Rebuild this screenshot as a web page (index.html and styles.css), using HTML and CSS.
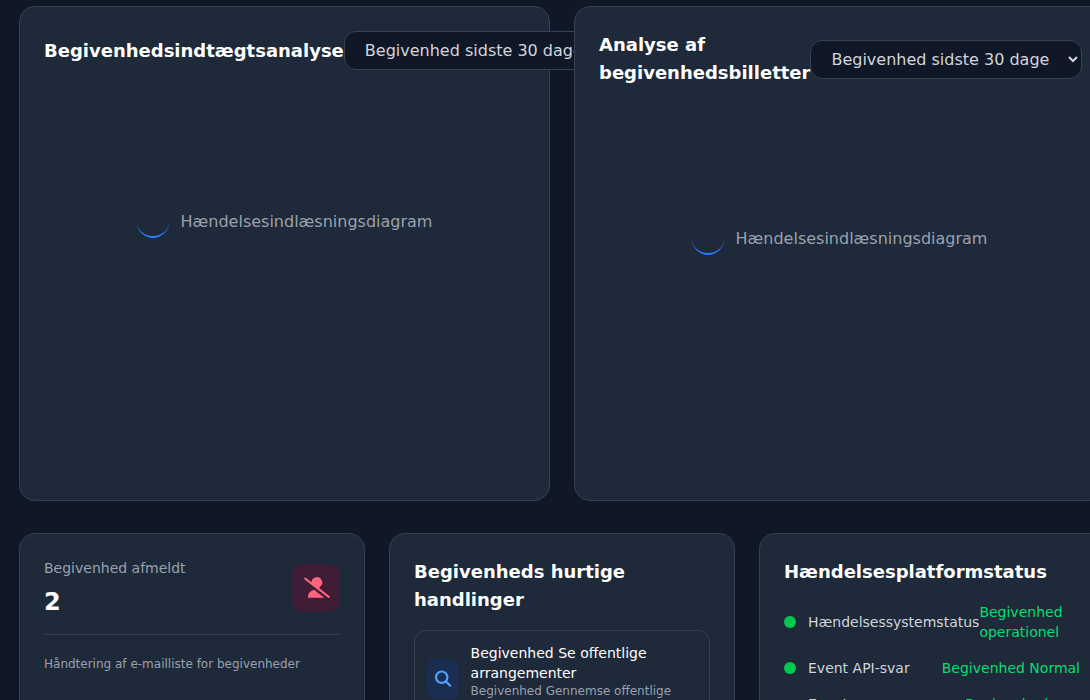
FILE: index.html
```
<!DOCTYPE html>
<html lang="da">
<head>
    <meta charset="UTF-8">
    <meta name="viewport" content="width=device-width, initial-scale=1.0">
    <title>Begivenheder</title>
    <link rel="stylesheet" href="styles.css">
</head>
<body>
    <main class="dashboard">
        <section class="charts">
            <div class="card">
                <div class="card-header">
                    <h3>Begivenhedsindtægtsanalyse</h3>
                    <select class="period">
                        <option>Begivenhed sidste 30 dage</option>
                    </select>
                </div>
                <div class="chart">
                    <div class="spinner"></div>
                    <span>Hændelsesindlæsningsdiagram</span>
                </div>
            </div>
            <div class="card">
                <div class="card-header">
                    <h3>Analyse af begivenhedsbilletter</h3>
                    <select class="period">
                        <option>Begivenhed sidste 30 dage</option>
                    </select>
                </div>
                <div class="chart">
                    <div class="spinner"></div>
                    <span>Hændelsesindlæsningsdiagram</span>
                </div>
            </div>
        </section>

        <section class="widgets">
            <div class="card">
                <div class="stat">
                    <div>
                        <p class="stat-label">Begivenhed afmeldt</p>
                        <p class="stat-value">2</p>
                    </div>
                    <div class="stat-icon">
                        <svg width="28" height="24" viewBox="0 0 28 24" fill="#ff637e">
                            <path d="M9.700 7.500A5.300 5.300 0 1 1 18 10.700L16.500 12.800z"/>
                            <path d="M6 21.800v-1.300A6.600 6.600 0 0 1 12.400 14L22.300 21.800z"/>
                            <path d="M3.200 2.600L26.800 20.900" stroke="#ff637e" stroke-width="2" stroke-linecap="round"/>
                        </svg>
                    </div>
                </div>
                <div class="stat-footer">Håndtering af e-mailliste for begivenheder</div>
            </div>

            <div class="card">
                <h3 class="widget-title">Begivenheds hurtige handlinger</h3>
                <div class="action">
                    <div class="action-icon">
                        <svg width="20" height="20" viewBox="0 0 20 20" fill="none" stroke="#51a2ff" stroke-width="2.200">
                            <circle cx="8.700" cy="8.200" r="5.700"/>
                            <path d="M12.800 12.300l5 5"/>
                        </svg>
                    </div>
                    <div>
                        <p class="action-title">Begivenhed Se offentlige arrangementer</p>
                        <p class="action-text">Begivenhed Gennemse offentlige arrangementer</p>
                    </div>
                </div>
            </div>

            <div class="card">
                <h3 class="widget-title">Hændelsesplatformstatus</h3>
                <div class="status-list">
                    <div class="status">
                        <span class="dot"></span>
                        <span class="status-name">Hændelsessystemstatus</span>
                        <span class="status-value">Begivenhed operationel</span>
                    </div>
                    <div class="status">
                        <span class="dot"></span>
                        <span class="status-name">Event API-svar</span>
                        <span class="status-value">Begivenhed Normal</span>
                    </div>
                    <div class="status">
                        <span class="dot"></span>
                        <span class="status-name">Event<br>databaseydelse</span>
                        <span class="status-value wide">Begivenhed optimal</span>
                    </div>
                </div>
            </div>
        </section>
    </main>
</body>
</html>
```
FILE: styles.css
```
* {
    box-sizing: border-box;
}
body {
    margin: 0;
    height: 700px;
    overflow: hidden;
    background-color: #101828;
    color: #fff;
    font-family: "DejaVu Sans", sans-serif;
    font-size: 16px;
    line-height: 24px;
}
h3, p {
    margin: 0;
}
h3 {
    font-size: 18px;
    line-height: 28px;
    font-weight: bold;
}
.dashboard {
    width: 1086px;
    margin: 6px 0 0 19px;
}
.charts {
    display: grid;
    grid-template-columns: repeat(2, 531px);
    gap: 24px;
    margin-bottom: 32px;
}
.widgets {
    display: grid;
    grid-template-columns: repeat(3, 346px);
    gap: 24px;
}
.card {
    padding: 24px;
    background-color: #1e2939;
    border: 1px solid #364153;
    border-radius: 16px;
}
.charts .card {
    position: relative;
    height: 495px;
}
.widgets .card {
    height: 360px;
}
.card-header {
    display: flex;
    justify-content: space-between;
    align-items: center;
    margin-bottom: 24px;
}
.period {
    flex-shrink: 0;
    padding: 8px 16px;
    background-color: #101828;
    border: 1px solid #364153;
    border-radius: 12px;
    color: #d1d5dc;
    font-family: inherit;
    font-size: 16px;
}
.chart {
    display: flex;
    justify-content: center;
    align-items: center;
    gap: 12px;
    height: 256px;
    color: #99a1af;
}
.spinner {
    width: 32px;
    height: 32px;
    border-radius: 50%;
    border-bottom: 2px solid #2b7fff;
}
.stat {
    display: flex;
    justify-content: space-between;
    align-items: center;
    padding-bottom: 16px;
    border-bottom: 1px solid #364153;
}
.stat-label {
    margin-bottom: 8px;
    color: #99a1af;
    font-size: 14px;
    line-height: 20px;
}
.stat-value {
    font-size: 24px;
    line-height: 32px;
    font-weight: bold;
}
.stat-icon {
    display: flex;
    justify-content: center;
    align-items: center;
    width: 48px;
    height: 48px;
    border-radius: 12px;
    background-color: #401d37;
}
.stat-footer {
    padding-top: 21px;
    color: #99a1af;
    font-size: 12px;
    line-height: 16px;
}
.widget-title {
    margin-bottom: 16px;
}
.action {
    display: flex;
    align-items: center;
    gap: 12px;
    padding: 12px;
    border: 1px solid #364153;
    border-radius: 12px;
}
.action-icon {
    display: flex;
    flex-shrink: 0;
    justify-content: center;
    align-items: center;
    width: 31.6px;
    height: 40px;
    border-radius: 8px;
    background-color: #1c2d52;
}
.action-title {
    font-size: 14px;
    line-height: 20px;
}
.action-text {
    color: #99a1af;
    font-size: 12px;
    line-height: 16px;
}
.status-list {
    display: grid;
    gap: 16px;
}
.status {
    display: flex;
    align-items: center;
    font-size: 14px;
    line-height: 20px;
}
.dot {
    flex-shrink: 0;
    width: 12px;
    height: 12px;
    margin-right: 12px;
    border-radius: 50%;
    background-color: #00c950;
}
.status-name {
    color: #d1d5dc;
}
.status-value {
    margin-left: auto;
    color: #05df72;
}
.status-value.wide {
    width: 115px;
}
```
